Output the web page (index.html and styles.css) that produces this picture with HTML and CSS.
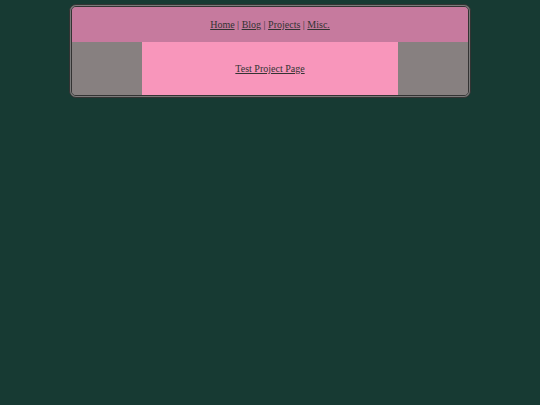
FILE: index.html
```html
<!DOCTYPE html>
<html>
<head>
<meta charset="utf-8">
<link rel="stylesheet" href="styles.css">
</head>
<body>
<div class="frame">
  <div class="header">
    <span><a href="#">Home</a> | <a href="#">Blog</a> | <a href="#">Projects</a> | <a href="#">Misc.</a></span>
  </div>
  <div class="main">
    <div class="side"></div>
    <div class="content"><a href="#">Test Project Page</a></div>
    <div class="side"></div>
  </div>
</div>
</body>
</html>
```
FILE: styles.css
```css
html, body {
  margin: 0;
  padding: 0;
  background: #173a33;
}
body {
  padding-top: 4px;
  font-family: "Liberation Serif", "Times New Roman", serif;
  font-size: 10px;
  color: #333333;
}
.frame {
  width: 396px;
  margin: 0 auto;
  border: 3px double #333;
  background: #7a7a7a;
  border-radius: 7px;
  overflow: hidden;
}
a { color: #333333; }
.header {
  background: #c67a9e;
  height: 35px;
  display: flex;
  align-items: center;
  justify-content: center;
}
.main {
  display: flex;
  height: 53px;
}
.side {
  width: 70px;
  background: #878080;
}
.content {
  flex: 1;
  background: #f896bb;
  display: flex;
  align-items: center;
  justify-content: center;
}
```
